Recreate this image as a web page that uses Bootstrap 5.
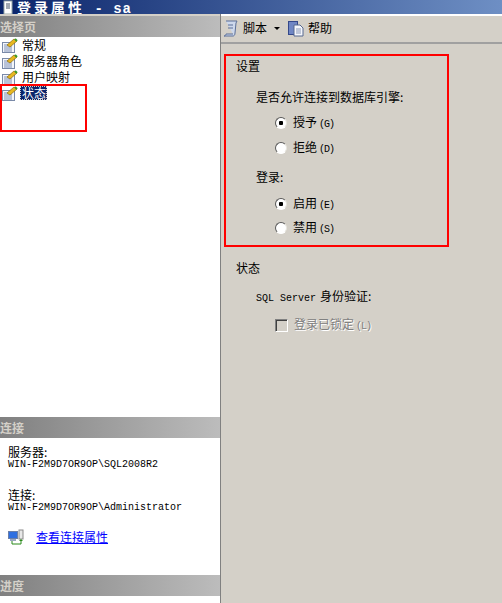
<!DOCTYPE html>
<html lang="zh-CN">
<head>
  <meta charset="UTF-8">
  <title>登录属性 - sa</title>
  <meta name="viewport" content="width=device-width, initial-scale=1">
  <link href="https://cdn.jsdelivr.net/npm/bootstrap@5.3.0/dist/css/bootstrap.min.css" rel="stylesheet">
  <style>
    html, body { height: 100%; }
    body {
      margin: 0;
      height: 603px;
      overflow: hidden;
      background: #fff;
      color: #000;
      font-family: "Noto Sans CJK SC", "Liberation Sans", sans-serif;
      font-size: 12px;
      line-height: 16px;
      position: relative;
    }
    .title-strip {
      height: 14px;
      background: linear-gradient(to right, #0a246a, #6e8fc4);
      color: #fff;
      font-weight: 700;
      font-size: 14px;
      line-height: 14px;
      padding-left: 2px;
      white-space: pre;
    }
    .title-strip span { letter-spacing: 3px; }
    .title-strip .title-tail {
      font-family: "Liberation Mono", monospace;
      letter-spacing: 1px;
    }
    .title-doc { vertical-align: top; margin-right: 2px; }
    .dlg-body { height: 589px; }
    .side-pane {
      width: 220px;
      background: #fff;
      border-top: 2px solid #d4d0c8;
    }
    .side-head {
      height: 21px;
      background: linear-gradient(to right, #808080, #bcbcbc);
      color: #d4d0c8;
      font-weight: 700;
      line-height: 21px;
    }
    .page-list { height: 380px; }
    .page-row { height: 16px; padding-left: 1px; white-space: nowrap; }
    .page-row svg { margin-right: 4px; flex: none; }
    .page-on {
      background: #0a246a;
      color: #fff;
      outline: 1px dotted #d4d0c8;
      outline-offset: -1px;
      margin-left: -2px;
      padding: 0 1px 0 2px;
      line-height: 14px;
    }
    .conn-box { height: 137px; padding: 7px 0 0 8px; }
    .conn-label { line-height: 13px; }
    .conn-mono {
      font-family: "Liberation Mono", "DejaVu Sans Mono", monospace;
      font-size: 10px;
      line-height: 12px;
      white-space: nowrap;
    }
    .conn-label + .conn-mono { margin-top: 1px; }
    .conn-gap { margin-bottom: 17px; }
    .conn-link { color: #0000ff; text-decoration: underline; margin-left: 12px; }
    .conn-row { margin-top: 15px; }
    .divider { width: 1px; background: #808080; }
    .main-pane { background: #d4d0c8; border-top: 2px solid #fff; }
    .tool-row { height: 28px; border-bottom: 2px solid #a0a0a0; padding-left: 2px; padding-bottom: 2px; }
    .tool-arrow {
      width: 0; height: 0;
      border-left: 3px solid transparent;
      border-right: 3px solid transparent;
      border-top: 3px solid #000;
      margin: 0 8px 0 7px;
    }
    .main-form { padding: 14px 0 0 15px; }
    .form-sec { height: 16px; line-height: 16px; }
    .form-ask { padding-left: 20px; height: 16px; }
    .form-opt { padding-left: 39px; height: 16px; }
    .form-opt label { margin-left: 6px; }
    .hotkey {
      font-size: 10px;
      font-family: "Liberation Mono", monospace;
      letter-spacing: -1px;
      margin-left: 2px;
    }
    .sql-word { margin-right: 4px; font-size: 10px; }
    .fake-radio {
      appearance: none;
      width: 12px; height: 12px;
      margin: 0;
      border-radius: 50%;
      border: 1px solid;
      border-color: #5a5a5a #e8e6e0 #fff #5a5a5a;
      background: #fff;
      flex: none;
    }
    .fake-radio:checked { background: radial-gradient(circle, #000 0 2px, #fff 2.5px); }
    .fake-check {
      appearance: none;
      width: 13px; height: 13px;
      margin: 0;
      border: 1px solid;
      border-color: #808080 #fff #fff #808080;
      background: #d4d0c8;
      box-shadow: inset 1px 1px 0 #404040;
      flex: none;
    }
    .off-text { color: #808080; text-shadow: 1px 1px 0 #fff; }
    .red-mark { position: absolute; border: 2px solid #f00; pointer-events: none; }
    .red-left { left: 0; top: 84px; width: 87px; height: 48px; }
    .red-right { left: 224px; top: 54px; width: 225px; height: 193px; }
  </style>
</head>
<body>

<div class="title-strip"><svg class="title-doc" width="13" height="14" viewBox="0 0 13 14"><rect x="2" y="1" width="8" height="13" fill="#fff" stroke="#9aa"/><path d="M4 4h4M4 6h4M4 8h4" stroke="#456"/></svg><span>登录属性</span><span class="title-tail"> - sa</span></div>

<div class="dlg-body d-flex">
  <div class="side-pane d-flex flex-column">
    <div class="side-head">选择页</div>
    <div class="page-list">
      <div class="page-row d-flex align-items-center"><svg width="17" height="15" viewBox="0 0 17 15"><use href="#page-ico"/></svg>常规</div>
      <div class="page-row d-flex align-items-center"><svg width="17" height="15" viewBox="0 0 17 15"><use href="#page-ico"/></svg>服务器角色</div>
      <div class="page-row d-flex align-items-center"><svg width="17" height="15" viewBox="0 0 17 15"><use href="#page-ico"/></svg>用户映射</div>
      <div class="page-row d-flex align-items-center"><svg width="17" height="15" viewBox="0 0 17 15"><use href="#page-ico"/></svg><span class="page-on">状态</span></div>
    </div>
    <div class="side-head">连接</div>
    <div class="conn-box">
      <div class="conn-label">服务器:</div>
      <div class="conn-mono conn-gap">WIN-F2M9D7OR9OP\SQL2008R2</div>
      <div class="conn-label">连接:</div>
      <div class="conn-mono">WIN-F2M9D7OR9OP\Administrator</div>
      <div class="conn-row d-flex align-items-center">
        <svg width="16" height="16" viewBox="0 0 16 16"><rect x="0.5" y="2.5" width="9" height="7" fill="#2f6fe0" stroke="#6a7fa8"/><rect x="2" y="10" width="6" height="2" fill="#9aa6c0"/><rect x="11" y="1" width="4" height="9" fill="#e8e8e8" stroke="#8a8a8a"/><path d="M4 12v3h9v-4" fill="none" stroke="#2a8a1a"/><path d="M11 12l2-2 2 2" fill="#2a8a1a"/></svg>
        <a class="conn-link" href="#">查看连接属性</a>
      </div>
    </div>
    <div class="side-head">进度</div>
  </div>
  <div class="divider"></div>
  <div class="main-pane flex-grow-1">
    <div class="tool-row d-flex align-items-center">
      <svg class="me-1" width="16" height="17" viewBox="0 0 16 17"><path d="M3 1h11l-1 2-1 10c0 2-1 3-2 3H1c1 0 2-1 2-2h7" fill="#cdd8ec" stroke="#5b6f98"/><path d="M5 5h5M5 8h5" stroke="#5b6f98"/></svg>
      <span>脚本</span>
      <span class="tool-arrow"></span>
      <svg class="me-1" width="16" height="17" viewBox="0 0 16 17"><rect x="0.5" y="1.5" width="9" height="13" fill="#6f86c4" stroke="#34488a"/><path d="M6 5h6l3 3v8H6z" fill="#f4f6fb" stroke="#56688f"/><path d="M8 9h5M8 11h5M8 13h5" stroke="#8a98b8"/></svg>
      <span>帮助</span>
    </div>
    <div class="main-form">
      <div class="form-sec">设置</div>
      <div class="form-ask" style="margin-top:15px">是否允许连接到数据库引擎:</div>
      <div class="form-opt d-flex align-items-center" style="margin-top:10px"><input class="fake-radio" type="radio" name="grant" id="g1" checked><label for="g1">授予<span class="hotkey">(G)</span></label></div>
      <div class="form-opt d-flex align-items-center" style="margin-top:9px"><input class="fake-radio" type="radio" name="grant" id="g2"><label for="g2">拒绝<span class="hotkey">(D)</span></label></div>
      <div class="form-ask" style="margin-top:13px">登录:</div>
      <div class="form-opt d-flex align-items-center" style="margin-top:11px"><input class="fake-radio" type="radio" name="login" id="l1" checked><label for="l1">启用<span class="hotkey">(E)</span></label></div>
      <div class="form-opt d-flex align-items-center" style="margin-top:8px"><input class="fake-radio" type="radio" name="login" id="l2"><label for="l2">禁用<span class="hotkey">(S)</span></label></div>
      <div class="form-sec" style="margin-top:24px">状态</div>
      <div class="form-ask" style="margin-top:12px"><span class="conn-mono sql-word">SQL Server</span>身份验证:</div>
      <div class="form-opt d-flex align-items-center" style="margin-top:13px"><input class="fake-check" type="checkbox" id="lk" disabled><label class="off-text" for="lk">登录已锁定<span class="hotkey">(L)</span></label></div>
    </div>
  </div>
</div>

<div class="red-mark red-left"></div>
<div class="red-mark red-right"></div>

<svg width="0" height="0" class="position-absolute">
  <defs>
    <g id="page-ico">
      <rect x="1.5" y="4.5" width="12" height="10" fill="#f4f6fa" stroke="#7a8aa8"/>
      <path d="M3 7h4M3 9h8M3 11h8M3 13h8" stroke="#7d8fb5"/>
      <path d="M6 7l7-6 3 2-7 6z" fill="#e8b820" stroke="#8a6a10" stroke-width=".7"/>
      <path d="M14 1l2 2" stroke="#3a9a2a" stroke-width="2"/>
    </g>
  </defs>
</svg>

</body>
</html>
